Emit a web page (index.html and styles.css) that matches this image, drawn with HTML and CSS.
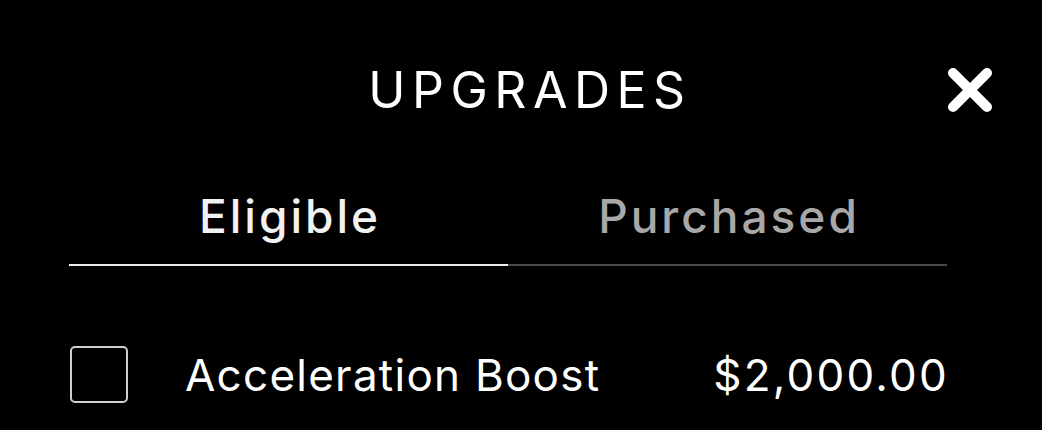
FILE: index.html
```html
<!DOCTYPE html>
<html>
<head>
<meta charset="utf-8">
<link rel="stylesheet" href="styles.css">
</head>
<body>
<div class="panel">
  <header class="header">
    <h1 class="title">UPGRADES</h1>
    <button class="close" aria-label="Close">
      <svg viewBox="0 0 46 46" width="46" height="46">
        <path d="M6 6 L40 40 M40 6 L6 40" stroke="#fff" stroke-width="10" stroke-linecap="round" fill="none"/>
      </svg>
    </button>
  </header>
  <nav class="tabs">
    <div class="tab active">Eligible</div>
    <div class="tab">Purchased</div>
  </nav>
  <div class="row">
    <span class="checkbox"></span>
    <span class="name">Acceleration Boost</span>
    <span class="price">$2,000.00</span>
  </div>
</div>
</body>
</html>
```

FILE: styles.css
```css
html, body {
  margin: 0;
  padding: 0;
  background: #000;
  width: 1042px;
  height: 430px;
  overflow: hidden;
}
body {
  font-family: Inter, "Liberation Sans", sans-serif;
  color: #fff;
}
.panel {
  padding: 0 95px 0 69px;
}
.header {
  position: relative;
  height: 180px;
  display: flex;
  justify-content: center;
}
.title {
  margin: 62px 0 0 44px;
  font-size: 50px;
  font-weight: 400;
  letter-spacing: 6.5px;
  line-height: 56px;
}
.close {
  position: absolute;
  right: -46px;
  top: 67px;
  width: 46px;
  height: 46px;
  padding: 0;
  border: 0;
  background: none;
}
.close svg { display: block; }
.tabs {
  display: flex;
  height: 84px;
  border-bottom: 2px solid #4a4a4a;
}
.tab {
  flex: 1;
  text-align: center;
  font-size: 46px;
  font-weight: 500;
  line-height: 56px;
  padding-top: 8px;
  color: #a8a8a8;
  letter-spacing: 3px;
  text-indent: 3px;
}
.tab.active {
  color: #f2f2f2;
  box-shadow: 0 1px 0 0 #eee, 0 2px 0 0 #eee;
}
.row {
  display: flex;
  align-items: center;
  margin-top: 80px;
  margin-right: -93px;
  padding-right: 91px;
}
.checkbox {
  width: 54px;
  height: 53px;
  border: 2px solid #d0d0d0;
  border-radius: 5px;
  margin-left: 1px;
}
.name {
  margin-left: 57px;
  font-size: 44px;
  font-weight: 400;
  letter-spacing: 1.25px;
  flex: 1;
}
.price {
  font-size: 44px;
  font-weight: 400;
  letter-spacing: 2.2px;
}
```
